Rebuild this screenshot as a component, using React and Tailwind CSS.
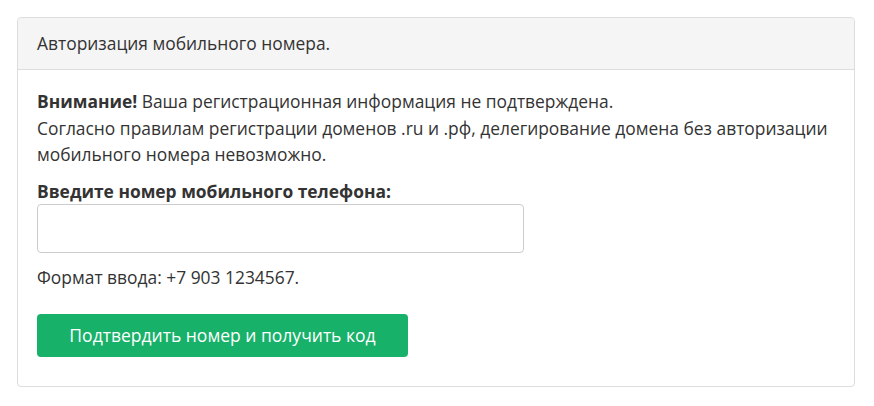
export default function App() {
  return (
    <div className="min-h-screen bg-white pl-[17px] pr-[19px] pt-[17px] font-['Open_Sans',sans-serif] text-[#333]">
      <div className="rounded border border-[#ddd] bg-white">
        <div className="h-[52px] flex items-center rounded-t border-b border-[#ddd] bg-[#f5f5f5] px-[19px] text-[17.4px]">
          Авторизация мобильного номера.
        </div>
        <div className="px-[19px] pt-[18px] pb-[29px] text-[17.4px] leading-[26.5px]">
          <p>
            <b className="font-bold">Внимание!</b> Ваша регистрационная информация не подтверждена.
            <br />
            Согласно правилам регистрации доменов .ru и .рф, делегирование домена без авторизации мобильного номера невозможно.
          </p>
          <label className="mt-[11px] block font-bold leading-[25px]">Введите номер мобильного телефона:</label>
          <input
            type="text"
            className="block h-[49px] w-[487px] rounded border border-[#ccc] bg-white px-3 outline-none"
          />
          <p className="mt-[11px]">Формат ввода: +7 903 1234567.</p>
          <button className="mt-[24px] flex h-[43px] w-[371px] items-center justify-center rounded bg-[#17b169] text-[17.5px] text-white">
            Подтвердить номер и получить код
          </button>
        </div>
      </div>
    </div>
  );
}
